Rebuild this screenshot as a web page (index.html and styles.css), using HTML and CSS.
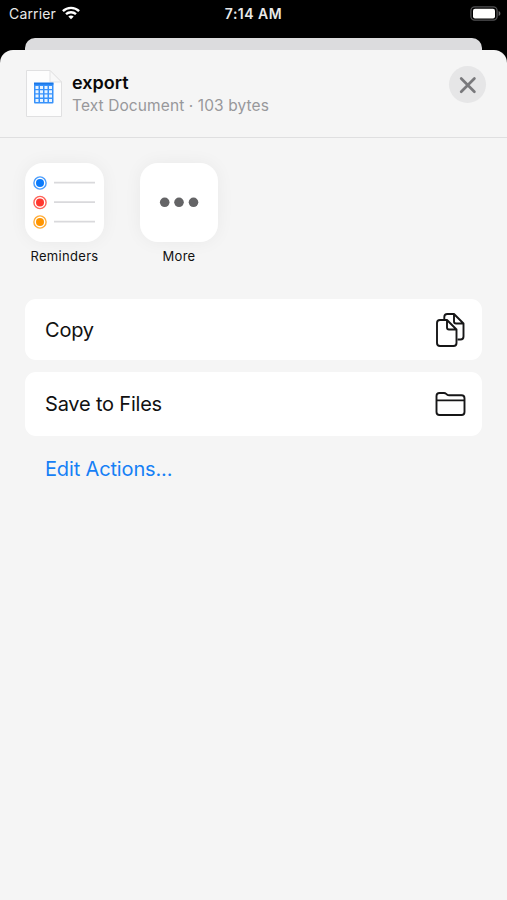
FILE: index.html
```html
<!DOCTYPE html>
<html lang="en">
<head>
<meta charset="utf-8">
<title>Share</title>
<link rel="stylesheet" href="styles.css">
</head>
<body>
<header class="status">
  <div class="carrier"><span>Carrier</span>
    <svg class="wifi" width="18" height="14" viewBox="0 0 18 14" fill="none" stroke="#fff" stroke-width="2.4"><path d="M.9 5.1C5.4.8 12.6.8 17.1 5.1M4 8.2c2.8-2.6 7.2-2.6 10 0"/><path d="M6.3 10.5c1.5-1.4 3.9-1.4 5.4 0L9 13.2z" fill="#fff" stroke="none"/></svg>
  </div>
  <div class="time">7:14 AM</div>
  <svg class="battery" width="31" height="15" viewBox="0 0 31 15"><rect x=".9" y=".9" width="26.2" height="13.2" rx="3.8" fill="none" stroke="#525254" stroke-width="1.3"/><rect x="3" y="2.7" width="22" height="9.8" rx="2" fill="#fff"/><path d="M28.6 5c2.4.8 2.4 4.2 0 5z" fill="#68686a"/></svg>
</header>
<div class="behind"></div>
<main class="sheet">
  <section class="head">
    <svg class="doc" width="38" height="49" viewBox="0 0 38 49"><path d="M1.5 1.5H25L36.500 13V47.500H1.500Z" fill="#fdfdfd" stroke="#e0e0e1"/><path d="M25 1.500V13H36.500Z" fill="#f8f8f8" stroke="#e3e3e4"/><rect x="9" y="14" width="19.500" height="20.500" rx="1" fill="#3792fb"/><path d="M9 14.500H28.500" stroke="#1877e8" stroke-width="2"/><g fill="#e9f4ff"><path id="cells" d="M10.500 17h3v3h-3zM15 17h3v3h-3zM19.500 17h3v3h-3zM24 17h3v3h-3z"/><use href="#cells" y="4.300"/><use href="#cells" y="8.600"/><use href="#cells" y="12.900"/></g></svg>
    <div class="info"><h1>export</h1><p>Text Document · 103 bytes</p></div>
    <button class="close" aria-label="Close"><svg width="37" height="37" viewBox="0 0 37 37" fill="none" stroke="#79797c" stroke-width="2.700" stroke-linecap="round"><path d="M12.200 12.500l13.200 13.200M25.400 12.500L12.200 25.700"/></svg></button>
  </section>
  <section class="apps">
    <div class="app"><div class="tile"><svg width="78" height="78" viewBox="0 0 78 78"><g stroke="#d9d9dc" stroke-width="1.800"><path d="M29 19.700H70M29 39.200H70M29 58.700H70"/></g><g stroke-width="1.400"><circle cx="15" cy="20" r="4" fill="#0b7bfb"/><circle cx="15" cy="20" r="6.100" fill="none" stroke="#4a9cfc"/><circle cx="15" cy="39.500" r="4" fill="#ff382f"/><circle cx="15" cy="39.500" r="6.100" fill="none" stroke="#ff6258"/><circle cx="15" cy="59" r="4" fill="#ff9500"/><circle cx="15" cy="59" r="6.100" fill="none" stroke="#ffac37"/></g></svg></div><span>Reminders</span></div>
    <div class="app more"><div class="tile"><svg width="78" height="78" viewBox="0 0 78 78" fill="#646466"><circle cx="24.700" cy="39.300" r="4.800"/><circle cx="39" cy="39.300" r="4.800"/><circle cx="53.500" cy="39.300" r="4.800"/></svg></div><span>More</span></div>
  </section>
  <section class="actions">
    <div class="action copy"><span>Copy</span><svg width="32" height="36" viewBox="0 0 32 36" fill="none" stroke="#161617" stroke-width="1.900" stroke-linejoin="round"><path d="M9.300 8V5Q9.300 2 12.300 2H19L28.500 11.500V24.500Q28.500 27.500 25.500 27.500H22.500M19 2V9.500Q19 11.500 21 11.500H28.500"/><path d="M2 11Q2 8 5 8H12L21.500 17.500V31Q21.500 34 18.500 34H5Q2 34 2 31ZM12 8V15.500Q12 17.500 14 17.500H21.500"/></svg></div>
    <div class="action save"><span>Save to Files</span><svg width="32" height="26" viewBox="0 0 32 26" fill="none" stroke="#161617" stroke-width="1.900" stroke-linejoin="round"><path d="M1.500 5Q1.500 2 4.500 2H9Q10.200 2 11.200 2.900L12 3.600Q12.900 4.300 14.200 4.300H26.500Q29.500 4.300 29.500 7.300V21Q29.500 24 26.500 24H4.500Q1.500 24 1.500 21ZM1.500 9.400H29.500"/></svg></div>
  </section>
  <a class="edit">Edit Actions...</a>
</main>
</body>
</html>
```
FILE: styles.css
```css
* { box-sizing: border-box; }
body { margin: 0; height: 900px; background: #000; font-family: Inter, "Liberation Sans", sans-serif; color: #111; overflow: hidden; display: flex; flex-direction: column; }
svg { display: block; flex: none; }
.status { height: 38px; display: grid; grid-template-columns: 1fr auto 1fr; color: #e9e9e9; font-size: 14px; line-height: 28px; }
.carrier { display: flex; padding-left: 9px; gap: 6px; letter-spacing: .15px; }
.wifi { margin-top: 6px; }
.time { font-weight: 600; letter-spacing: .5px; }
.battery { justify-self: end; margin: 6px 6px 0 0; }
.behind { height: 12px; margin: 0 25px; background: #dcdcde; border-radius: 10px 10px 0 0; flex: none; }
.sheet { flex: 1; background: #f5f5f5; border-radius: 13px 13px 0 0; }
.head { height: 88px; border-bottom: 1px solid #dfdfe0; display: flex; padding: 19px 21px 0 25px; }
.info { margin-left: 9px; flex: 1; }
h1 { margin: 3px 0 0; font-size: 18px; line-height: 22px; font-weight: 600; letter-spacing: 0; color: #090909; }
p { margin: 2px 0 0; font-size: 15.500px; line-height: 20px; color: #98989b; letter-spacing: .1px; }
.close { width: 37px; height: 37px; margin-top: -3px; padding: 0; border: 0; border-radius: 50%; background: #e6e6e7; }
.apps { display: flex; padding: 25px 25px 0; gap: 36px; height: 161px; }
.app { width: 79px; display: flex; flex-direction: column; align-items: center; font-size: 13px; line-height: 18px; }
.more { width: 78px; }
.app span { margin-top: 5px; letter-spacing: .3px; }
.tile { width: 100%; height: 79px; border-radius: 18px; background: #fff; box-shadow: 0 0 18px rgba(0,0,0,.05); }
.actions { padding: 0 25px; display: flex; flex-direction: column; gap: 12px; }
.action { background: #fff; border-radius: 11px; display: flex; align-items: center; justify-content: space-between; padding: 0 15px 0 20px; font-size: 20px; letter-spacing: -.2px; }
.copy { height: 61px; }
.save { height: 64px; }
.edit { display: block; margin: 19px 0 0 45px; font-size: 20px; line-height: 28px; letter-spacing: -.15px; color: #1680f5; }
```
